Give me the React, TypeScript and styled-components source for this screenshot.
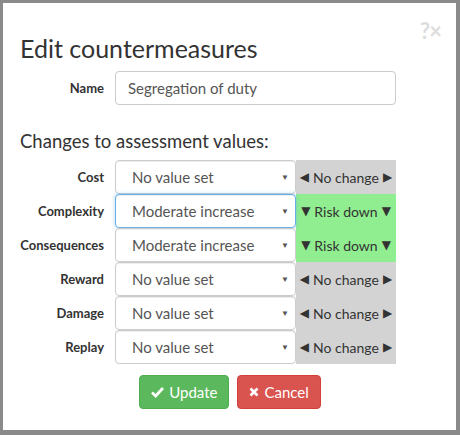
import React from "react";
import styled, { createGlobalStyle } from "styled-components";

const Global = createGlobalStyle`
  html, body { margin: 0; padding: 0; background: #8a8a8a; }
  body { font-family: Lato, "Open Sans", sans-serif; color: #333; }
  * { box-sizing: border-box; }
`;

const Dialog = styled.div`
  position: relative;
  margin: 3px 4px 5px 3px;
  width: 453px;
  height: 427px;
  background: #fff;
  padding: 0 20px 0 17px;
  display: flex;
  flex-direction: column;
`;

const Close = styled.div`
  position: absolute;
  top: 14px;
  right: 15px;
  font-size: 22px;
  font-weight: 700;
  color: #ddd;
  letter-spacing: -1px;
`;

const Title = styled.h2`
  margin: 29px 0 0 0;
  font-size: 25px;
  font-weight: 400;
  line-height: 32px;
  color: #333;
`;

const Row = styled.div`
  display: grid;
  grid-template-columns: 84px 281px;
  column-gap: 11px;
  align-items: center;
`;

const NameRow = styled(Row)`
  margin-top: 7px;
`;

const Label = styled.label`
  text-align: right;
  font-size: 13px;
  font-weight: 700;
  color: #333;
  white-space: nowrap;
`;

const TextInput = styled.input`
  height: 34px;
  width: 100%;
  border: 1px solid #ccc;
  border-radius: 4px;
  padding: 0 12px;
  font-family: inherit;
  font-size: 15px;
  color: #555;
  outline: none;
`;

const Heading = styled.h3`
  margin: 22px 0 0 0;
  font-size: 18.5px;
  font-weight: 400;
  line-height: 28px;
  color: #333;
`;

const Table = styled.div`
  margin-top: 5px;
  display: flex;
  flex-direction: column;
`;

const ValueRow = styled(Row)`
  height: 34px;
`;

const Control = styled.div`
  display: flex;
  height: 34px;
`;

const SelectWrap = styled.div`
  position: relative;
  width: 181px;
  height: 34px;
`;

const Select = styled.div<{ $focus?: boolean }>`
  height: 34px;
  border: 1px solid ${(p) => (p.$focus ? "#66afe9" : "#ccc")};
  border-radius: 4px;
  padding: 0 16px;
  display: flex;
  align-items: center;
  font-size: 15px;
  color: #555;
  background: #fff;
  box-shadow: ${(p) =>
    p.$focus ? "inset 0 1px 1px rgba(0,0,0,.075), 0 0 4px rgba(102,175,233,.5)" : "inset 0 1px 1px rgba(0,0,0,.075)"};
`;

const Arrow = styled.span`
  position: absolute;
  right: 7px;
  top: 50%;
  transform: translateY(-50%);
  font-size: 8px;
  color: #555;
`;

const Badge = styled.div<{ $down?: boolean }>`
  width: 100px;
  flex: none;
  height: 34px;
  background: ${(p) => (p.$down ? "#90ee90" : "#d3d3d3")};
  display: flex;
  align-items: center;
  justify-content: center;
  font-size: 14px;
  color: #333;
  white-space: nowrap;
  overflow: hidden;
`;

const Tri = styled.span`
  font-family: "DejaVu Sans", sans-serif;
  font-size: 12px;
  margin: 0 4px;
`;

const Buttons = styled.div`
  display: flex;
  justify-content: center;
  gap: 8px;
  margin-top: 11px;
  padding-left: 4px;
`;

const Button = styled.button<{ $kind: "ok" | "cancel" }>`
  height: 34px;
  border: 1px solid ${(p) => (p.$kind === "ok" ? "#4cae4c" : "#d43f3a")};
  background: ${(p) => (p.$kind === "ok" ? "#5cb85c" : "#d9534f")};
  color: #fff;
  border-radius: 4px;
  padding: 0 11px;
  font-family: inherit;
  font-size: 15px;
  display: flex;
  align-items: center;
  gap: 5px;
`;

const rows = [
  { label: "Cost", value: "No value set", down: false },
  { label: "Complexity", value: "Moderate increase", down: true, focus: true },
  { label: "Consequences", value: "Moderate increase", down: true },
  { label: "Reward", value: "No value set", down: false },
  { label: "Damage", value: "No value set", down: false },
  { label: "Replay", value: "No value set", down: false },
];

export default function App() {
  return (
    <>
      <Global />
      <Dialog>
        <Close>?×</Close>
        <Title>Edit countermeasures</Title>
        <NameRow>
          <Label>Name</Label>
          <TextInput defaultValue="Segregation of duty" />
        </NameRow>
        <Heading>Changes to assessment values:</Heading>
        <Table>
          {rows.map((r) => (
            <ValueRow key={r.label}>
              <Label>{r.label}</Label>
              <Control>
                <SelectWrap>
                  <Select $focus={r.focus}>{r.value}</Select>
                  <Arrow>▼</Arrow>
                </SelectWrap>
                <Badge $down={r.down}>
                  {r.down ? (
                    <>
                      <Tri>▼</Tri>Risk down<Tri>▼</Tri>
                    </>
                  ) : (
                    <>
                      <Tri>◀</Tri>No change<Tri>▶</Tri>
                    </>
                  )}
                </Badge>
              </Control>
            </ValueRow>
          ))}
        </Table>
        <Buttons>
          <Button $kind="ok">
            <svg width="13" height="12" viewBox="0 0 13 12">
              <path d="M1 6.5 L4.7 10 L12 2" fill="none" stroke="#fff" strokeWidth="2.8" />
            </svg>
            Update
          </Button>
          <Button $kind="cancel">
            <svg width="10" height="10" viewBox="0 0 10 10">
              <path d="M1.5 1.5 L8.5 8.5 M8.5 1.5 L1.5 8.5" stroke="#fff" strokeWidth="2.6" />
            </svg>
            Cancel
          </Button>
        </Buttons>
      </Dialog>
    </>
  );
}
